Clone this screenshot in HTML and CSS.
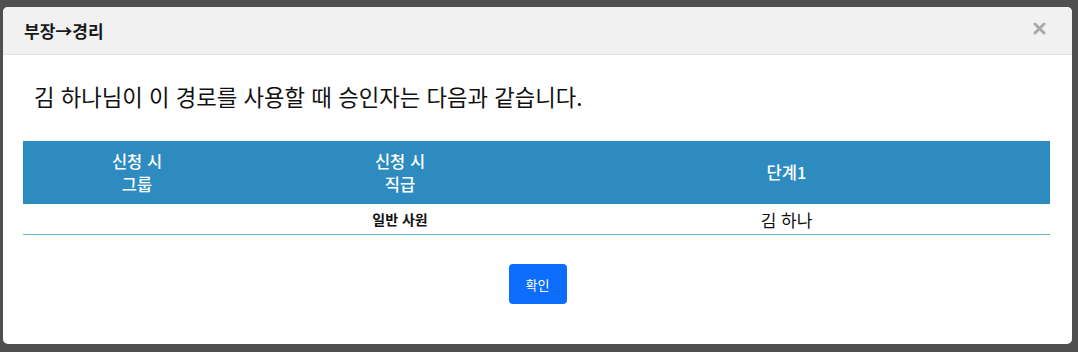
FILE: index.html
```html
<!DOCTYPE html>
<html lang="ko">
<head>
  <meta charset="UTF-8">
  <title>승인 경로</title>
  <link rel="stylesheet" href="styles.css">
</head>
<body>
  <div class="modal">
    <div class="modal-header">
      <h3 class="modal-title">부장→경리</h3>
      <span class="modal-close">
        <svg width="13" height="13" viewBox="0 0 13 13">
          <path d="M2 2 L11 11 M11 2 L2 11" stroke="#aaa" stroke-width="3" stroke-linecap="round"/>
        </svg>
      </span>
    </div>
    <div class="modal-body">
      <p class="notice">김 하나님이 이 경로를 사용할 때 승인자는 다음과 같습니다.</p>
      <table class="approval">
        <thead>
          <tr>
            <th class="col-group">신청 시<br>그룹</th>
            <th class="col-rank">신청 시<br>직급</th>
            <th class="col-step">단계1</th>
          </tr>
        </thead>
        <tbody>
          <tr>
            <td></td>
            <td class="rank">일반 사원</td>
            <td class="approver">김 하나</td>
          </tr>
        </tbody>
      </table>
      <div class="actions">
        <button class="btn-ok">확인</button>
      </div>
    </div>
  </div>
</body>
</html>
```

FILE: styles.css
```css
html, body {
  margin: 0;
  height: 100%;
}
body {
  background: #4f4f4f;
  font-family: "Noto Sans CJK KR", "Noto Sans", sans-serif;
  padding: 7px 6px 0 3px;
  box-sizing: border-box;
}
.modal {
  background: #fff;
  border-radius: 5px;
  height: 337px;
  overflow: hidden;
}
.modal-header {
  background: #f1f1f1;
  border-bottom: 1px solid #e2e2e2;
  height: 47px;
  display: flex;
  align-items: center;
  justify-content: space-between;
  padding: 0 26px 0 21px;
}
.modal-title {
  margin: 0;
  font-size: 17px;
  font-weight: bold;
  color: #1a1a1a;
}
.modal-close {
  display: flex;
  margin-top: -5px;
}
.modal-body {
  padding: 26px 20px 0 20px;
}
.notice {
  margin: 0 0 0 11px;
  font-size: 22.3px;
  color: #111;
  line-height: 30px;
}
.approval {
  width: 1027px;
  margin-top: 30px;
  border-collapse: collapse;
  text-align: center;
}
.approval th {
  background: #2e8bc0;
  color: #fff;
  font-weight: 500;
  font-size: 16.5px;
  line-height: 23px;
  height: 63px;
  padding: 0;
}
.col-group {
  width: 228px;
}
.col-rank {
  width: 298px;
}
.approval .col-step {
  padding-right: 26px;
}
.approval td {
  height: 30px;
  padding: 0;
  font-size: 17px;
  color: #111;
  border-bottom: 1px solid #6aaed6;
}
.approval .approver {
  padding-right: 26px;
}
.approval .rank {
  font-size: 14px;
  font-weight: bold;
}
.actions {
  text-align: center;
  margin-top: 29px;
}
.btn-ok {
  background: #0d6efd;
  color: #fff;
  border: none;
  border-radius: 4px;
  width: 58px;
  height: 40px;
  font-family: inherit;
  font-size: 13px;
  cursor: pointer;
}
```
